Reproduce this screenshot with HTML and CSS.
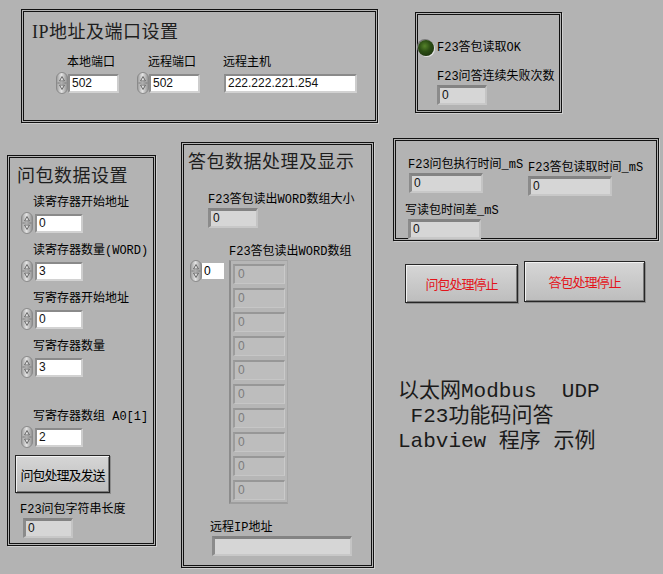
FILE: index.html
```html
<!DOCTYPE html>
<html lang="zh-CN">
<head>
<meta charset="utf-8">
<title>以太网Modbus UDP F23</title>
<link rel="stylesheet" href="styles.css">
</head>
<body>

<!-- shared drawing for the increment/decrement arrows -->
<svg class="defs" width="0" height="0">
  <defs>
    <linearGradient id="spin-fill" x1="0" y1="0" x2="1" y2="0">
      <stop offset="0" stop-color="#9a9a9a"/>
      <stop offset="0.45" stop-color="#e4e4e4"/>
      <stop offset="1" stop-color="#8c8c8c"/>
    </linearGradient>
    <symbol id="spin" viewBox="0 0 12 22">
      <rect x="0.5" y="0.5" width="11" height="21" rx="5.5" fill="url(#spin-fill)" stroke="#8a8a8a"/>
      <path d="M3.5 9 L6 4.5 L8.5 9 Z" fill="none" stroke="#6a6a6a"/>
      <path d="M3.5 13 L6 17.5 L8.5 13 Z" fill="none" stroke="#6a6a6a"/>
      <path d="M1.5 11 H10.5" stroke="#7a7a7a"/>
    </symbol>
  </defs>
</svg>

<div class="panel">

  <section class="box box-ip">
    <h2 class="title">IP地址及端口设置</h2>
    <div class="ip-row">
      <div class="ctl port-local">
        <span class="lbl pad-spin">本地端口</span>
        <div class="num"><svg class="spin"><use href="#spin"/></svg><span class="field ctrl port">502</span></div>
      </div>
      <div class="ctl port-remote">
        <span class="lbl pad-spin">远程端口</span>
        <div class="num"><svg class="spin"><use href="#spin"/></svg><span class="field ctrl port">502</span></div>
      </div>
      <div class="ctl host">
        <span class="lbl">远程主机</span>
        <div class="num"><span class="field ctrl host-field">222.222.221.254</span></div>
      </div>
    </div>
  </section>

  <section class="box box-status">
    <div class="led-row"><span class="led"></span><span class="lbl">F23答包读取OK</span></div>
    <div class="ctl fail-count">
      <span class="lbl">F23问答连续失败次数</span>
      <span class="field ind w50">0</span>
    </div>
  </section>

  <section class="box box-time">
    <div class="time-row">
      <div class="ctl t-exec">
        <span class="lbl">F23问包执行时间_mS</span>
        <span class="field ind">0</span>
      </div>
      <div class="ctl t-read">
        <span class="lbl">F23答包读取时间_mS</span>
        <span class="field ind">0</span>
      </div>
    </div>
    <div class="ctl t-diff">
      <span class="lbl">写读包时间差_mS</span>
      <span class="field ind">0</span>
    </div>
  </section>

  <div class="stop-bar">
    <button class="btn stop req">问包处理停止</button>
    <button class="btn stop rsp">答包处理停止</button>
  </div>

  <p class="caption">以太网Modbus  UDP
 F23功能码问答
Labview 程序 示例</p>

  <section class="box box-req">
    <h2 class="title">问包数据设置</h2>
    <div class="req-list">
      <div class="ctl reg">
        <span class="lbl pad-req">读寄存器开始地址</span>
        <div class="num"><svg class="spin"><use href="#spin"/></svg><span class="field ctrl">0</span></div>
      </div>
      <div class="ctl reg">
        <span class="lbl pad-req">读寄存器数量(WORD)</span>
        <div class="num"><svg class="spin"><use href="#spin"/></svg><span class="field ctrl">3</span></div>
      </div>
      <div class="ctl reg">
        <span class="lbl pad-req">写寄存器开始地址</span>
        <div class="num"><svg class="spin"><use href="#spin"/></svg><span class="field ctrl">0</span></div>
      </div>
      <div class="ctl reg">
        <span class="lbl pad-req">写寄存器数量</span>
        <div class="num"><svg class="spin"><use href="#spin"/></svg><span class="field ctrl">3</span></div>
      </div>
      <div class="ctl reg reg-arr">
        <span class="lbl pad-req">写寄存器数组 A0[1]</span>
        <div class="num"><svg class="spin"><use href="#spin"/></svg><span class="field ctrl">2</span></div>
      </div>
      <button class="btn send">问包处理及发送</button>
      <div class="ctl str-len">
        <span class="lbl">F23问包字符串长度</span>
        <span class="field ind w50">0</span>
      </div>
    </div>
  </section>

  <section class="box box-rsp">
    <h2 class="title">答包数据处理及显示</h2>
    <div class="ctl rsp-size">
      <span class="lbl">F23答包读出WORD数组大小</span>
      <span class="field ind w50">0</span>
    </div>
    <div class="arr">
      <span class="lbl arr-lbl">F23答包读出WORD数组</span>
      <div class="arr-body">
        <div class="arr-index"><svg class="spin"><use href="#spin"/></svg><span class="idx">0</span></div>
        <div class="arr-frame">
          <span class="elem">0</span>
          <span class="elem">0</span>
          <span class="elem">0</span>
          <span class="elem">0</span>
          <span class="elem">0</span>
          <span class="elem">0</span>
          <span class="elem">0</span>
          <span class="elem">0</span>
          <span class="elem">0</span>
          <span class="elem">0</span>
        </div>
      </div>
    </div>
    <div class="ctl rsp-ip">
      <span class="lbl">远程IP地址</span>
      <span class="field ind ip-ind"></span>
    </div>
  </section>

</div>
</body>
</html>
```

FILE: styles.css
```css
body {
  margin: 0;
  background: #b3b3b3;
  font-family: "Liberation Mono", "Noto Sans CJK SC", monospace;
  font-size: 12px;
  color: #000;
}

.defs {
  position: absolute;
  width: 0;
  height: 0;
}

.panel {
  position: relative;
  width: 663px;
  height: 574px;
  overflow: hidden;
}

/* front panel decorations: thin black double frame */
.box {
  position: absolute;
  box-sizing: border-box;
  border: 1px solid #111;
  box-shadow: inset 0 0 0 1px #b3b3b3, inset 0 0 0 2px #111, 1px 1px 0 #cecece;
}

.title {
  margin: 0;
  font: normal 18px/22px "Liberation Serif", "Noto Sans CJK SC", serif;
  letter-spacing: 0.5px;
  color: #1e1e1e;
  white-space: nowrap;
}

.ctl {
  display: flex;
  flex-direction: column;
  align-items: flex-start;
}

.lbl {
  display: block;
  line-height: 14px;
  white-space: nowrap;
}

.num {
  display: flex;
  align-items: center;
  height: 22px;
  margin-top: 2px;
}

.spin {
  width: 12px;
  height: 22px;
  flex: none;
}

.field {
  display: block;
  box-sizing: border-box;
  height: 19px;
  padding-left: 2px;
  font: 12px/15px "Liberation Sans", sans-serif;
  color: #111;
}

/* white editable control */
.ctrl {
  background: #fff;
  border-top: 2px solid #8a8a8a;
  border-left: 2px solid #8e8e8e;
  border-right: 2px solid #cdcdcd;
  border-bottom: 2px solid #d2d2d2;
}

/* grey read-only indicator */
.ind {
  height: 20px;
  margin-top: 1px;
  background: #d6d6d6;
  border-top: 3px solid #838383;
  border-left: 3px solid #8b8b8b;
  border-right: 2px solid #c4c4c4;
  border-bottom: 2px solid #c8c8c8;
}

.w50 {
  width: 50px;
}

/* IP / port settings */
.box-ip {
  left: 21px;
  top: 9px;
  width: 357px;
  height: 114px;
  padding: 11px 0 0 10px;
}

.ip-row {
  display: flex;
  margin-top: 13px;
}

.port-local {
  margin-left: 24px;
}

.port-remote {
  margin-left: 18px;
}

.host {
  margin-left: 23px;
}

.pad-spin {
  padding-left: 11px;
}

.port {
  width: 51px;
}

.host-field {
  width: 133px;
  margin-left: 1px;
}

/* status LED */
.box-status {
  left: 415px;
  top: 12px;
  width: 147px;
  height: 101px;
  padding: 27px 0 0 2px;
}

.led-row {
  display: flex;
  align-items: center;
  gap: 3px;
}

.led {
  width: 16px;
  height: 16px;
  border-radius: 50%;
  background: radial-gradient(circle at 42% 38%, #55832a 0, #2d4f15 40%, #142609 100%);
  box-shadow: 1px 1px 0 #e2e2e2, -1px -1px 0 #7a7a7a;
}

.fail-count {
  margin: 14px 0 0 19px;
}

/* timing */
.box-time {
  left: 393px;
  top: 138px;
  width: 266px;
  height: 103px;
  padding: 19px 0 0 14px;
}

.time-row {
  display: flex;
  align-items: flex-start;
}

.t-exec {
  width: 120px;
}

.t-exec .ind {
  width: 74px;
  margin-left: 1px;
}

.t-read {
  margin-top: 3px;
}

.t-read .ind {
  width: 84px;
}

.t-diff {
  margin: 8px 0 0 -3px;
}

.t-diff .ind {
  width: 73px;
  margin-left: 3px;
}

/* buttons */
.btn {
  box-sizing: border-box;
  padding: 0;
  font: 13px "Noto Sans CJK SC", sans-serif;
  letter-spacing: -1px;
  background: linear-gradient(#d6d6d6, #bdbdbd);
  border: 1px solid #262626;
  box-shadow: inset 1px 1px 0 #f2f2f2, inset -1px -1px 0 #7a7a7a, 1px 1px 0 #8c8c8c;
  cursor: pointer;
}

.stop-bar {
  position: absolute;
  left: 405px;
  top: 261px;
  display: flex;
  align-items: flex-start;
  gap: 6px;
}

.stop {
  color: #e3141b;
}

.req {
  width: 113px;
  height: 39px;
  margin-top: 3px;
}

.rsp {
  width: 121px;
  height: 41px;
}

.caption {
  position: absolute;
  left: 398px;
  top: 379px;
  margin: 0;
  font: 21px/25px "Liberation Mono", "Noto Sans CJK SC", monospace;
  color: #1a1a1a;
  white-space: pre;
}

/* request settings */
.box-req {
  left: 7px;
  top: 155px;
  width: 149px;
  height: 391px;
  padding: 9px 0 0 9px;
}

.req-list {
  display: flex;
  flex-direction: column;
  align-items: flex-start;
  gap: 10px;
  margin-top: 9px;
}

.reg {
  margin-left: 4px;
}

.reg .ctrl {
  width: 48px;
  margin-left: 2px;
}

.pad-req {
  padding-left: 12px;
}

.reg-arr {
  margin-top: 22px;
}

.send {
  width: 95px;
  height: 38px;
  margin: -3px 0 0 -2px;
  color: #000;
}

.str-len {
  margin-left: 3px;
}

.str-len .ind {
  margin-left: 3px;
}

/* response display */
.box-rsp {
  left: 181px;
  top: 142px;
  width: 193px;
  height: 426px;
  padding: 8px 0 0 6px;
}

.rsp-size {
  margin: 20px 0 0 20px;
}

.arr {
  margin: 17px 0 0 2px;
}

.arr-lbl {
  padding-left: 39px;
}

.arr-body {
  display: flex;
  align-items: flex-start;
  margin-top: 1px;
}

.arr-index {
  display: flex;
  align-items: center;
  height: 22px;
}

.idx {
  box-sizing: border-box;
  width: 22px;
  height: 16px;
  padding-left: 2px;
  background: #fff;
  font: 12px/16px "Liberation Sans", sans-serif;
}

.arr-frame {
  display: flex;
  flex-direction: column;
  gap: 4px;
  width: 59px;
  box-sizing: border-box;
  margin-left: 5px;
  padding: 3px 0 2px 2px;
  background: #b6b6b6;
  border-left: 2px solid #8c8c8c;
  border-top: 1px solid #a2a2a2;
  border-right: 1px solid #a8a8a8;
  border-bottom: 2px solid #9e9e9e;
}

.elem {
  box-sizing: border-box;
  width: 52px;
  height: 20px;
  padding-left: 3px;
  background: #bdbdbd;
  border-top: 2px solid #979797;
  border-left: 2px solid #9c9c9c;
  border-right: 1px solid #cacaca;
  border-bottom: 1px solid #c6c6c6;
  font: 12px/17px "Liberation Sans", sans-serif;
  color: #7c7c7c;
}

.rsp-ip {
  margin: 17px 0 0 22px;
}

.ip-ind {
  width: 140px;
  margin-left: 2px;
}
```
